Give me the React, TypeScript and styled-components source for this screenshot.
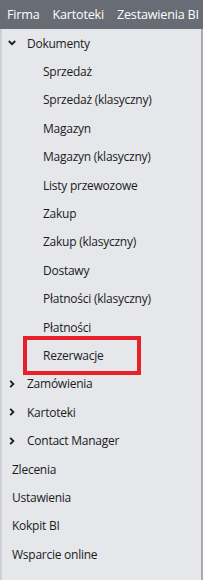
import * as React from "react";
import styled, { createGlobalStyle } from "styled-components";

const GlobalStyle = createGlobalStyle`
  html, body {
    margin: 0;
    padding: 0;
    background: #e6e7ea;
  }
  body {
    font-family: "Open Sans", "Noto Sans", sans-serif;
    font-size: 12px;
    color: #1b1b1b;
  }
`;

const Frame = styled.div`
  width: 203px;
  height: 580px;
  overflow: hidden;
  display: flex;
  flex-direction: column;
  background: #e6e7ea;
`;

const TopBar = styled.div`
  height: 29px;
  flex: none;
  background: #686c74;
  display: flex;
  align-items: center;
  gap: 13px;
  padding-left: 7px;
  white-space: nowrap;
  overflow: hidden;
`;

const TopItem = styled.span`
  color: #ffffff;
  font-size: 12.6px;
  letter-spacing: -0.2px;
`;

const Body = styled.div`
  flex: 1;
  display: flex;
  flex-direction: column;
  border-left: 2px solid #cfd0d4;
  border-right: 2px solid #a9aaae;
`;

const Row = styled.div<{ $indent: number }>`
  height: 28.4px;
  flex: none;
  display: flex;
  align-items: center;
  padding-left: ${(p) => p.$indent}px;
  font-size: 12px;
  letter-spacing: -0.25px;
  white-space: nowrap;
`;

const Boxed = styled.span`
  margin-left: -20px;
  padding: 0 0 0 16px;
  width: 94px;
  height: 31px;
  display: flex;
  align-items: center;
  border: 4px solid #e8202a;
`;

const Chevron = styled.svg`
  width: 8px;
  height: 8px;
  margin-right: 11px;
  flex: none;
`;

const Down = () => (
  <Chevron viewBox="0 0 8 8">
    <path d="M0.8 2 L4 5.2 L7.2 2" stroke="#1b1b1b" strokeWidth="1.8" fill="none" />
  </Chevron>
);

const Right = () => (
  <Chevron viewBox="0 0 8 8">
    <path d="M2.2 0.8 L5.4 4 L2.2 7.2" stroke="#1b1b1b" strokeWidth="1.8" fill="none" />
  </Chevron>
);

const docs = [
  "Sprzedaż",
  "Sprzedaż (klasyczny)",
  "Magazyn",
  "Magazyn (klasyczny)",
  "Listy przewozowe",
  "Zakup",
  "Zakup (klasyczny)",
  "Dostawy",
  "Płatności (klasyczny)",
  "Płatności",
];

const groups = ["Zamówienia", "Kartoteki", "Contact Manager"];
const plain = ["Zlecenia", "Ustawienia", "Kokpit BI", "Wsparcie online"];

export default function App() {
  return (
    <>
      <GlobalStyle />
      <Frame>
        <TopBar>
          <TopItem>Firma</TopItem>
          <TopItem>Kartoteki</TopItem>
          <TopItem>Zestawienia BI</TopItem>
          <TopItem>Serwis</TopItem>
        </TopBar>
        <Body>
          <Row $indent={6}>
            <Down />
            Dokumenty
          </Row>
          {docs.map((d) => (
            <Row key={d} $indent={41}>
              {d}
            </Row>
          ))}
          <Row $indent={41}>
            <Boxed>Rezerwacje</Boxed>
          </Row>
          {groups.map((g) => (
            <Row key={g} $indent={6}>
              <Right />
              {g}
            </Row>
          ))}
          {plain.map((p) => (
            <Row key={p} $indent={10}>
              {p}
            </Row>
          ))}
        </Body>
      </Frame>
    </>
  );
}
